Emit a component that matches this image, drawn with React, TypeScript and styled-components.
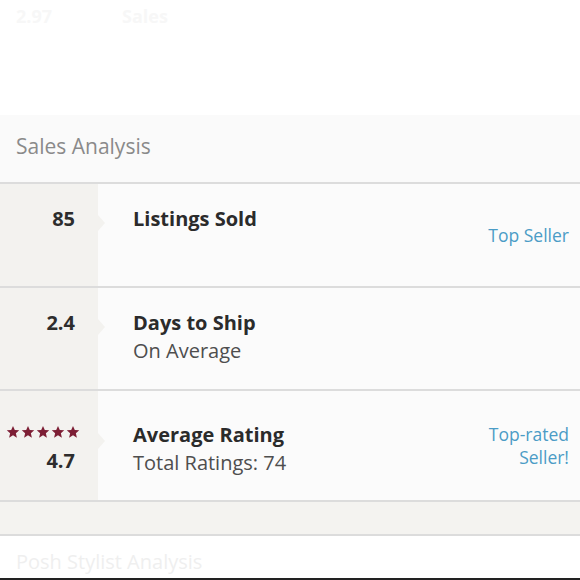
import styled, { createGlobalStyle } from 'styled-components';

const Global = createGlobalStyle`
  html, body {
    margin: 0;
    padding: 0;
    background: #ffffff;
  }
  body {
    font-family: 'Open Sans', 'Liberation Sans', sans-serif;
    width: 580px;
    height: 580px;
    overflow: hidden;
  }
`;

const Page = styled.div`
  display: flex;
  flex-direction: column;
  width: 580px;
  height: 580px;
`;

const Ghost = styled.div`
  height: 115px;
  box-sizing: border-box;
  padding: 4px 16px 0;
  display: flex;
  gap: 70px;
  font-size: 18px;
  color: #f7f7f7;
  font-weight: 700;
`;

const SectionHeader = styled.div`
  height: 67px;
  background: #fafafa;
  display: flex;
  align-items: center;
  padding: 0 16px;
  border-bottom: 2px solid #dcdcdc;
  h2 {
    margin: 0;
    font-size: 21px;
    font-weight: 400;
    color: #8a8a8a;
    padding-bottom: 6px;
  }
`;

const Row = styled.div<{ $height: number }>`
  display: flex;
  height: ${(p) => p.$height}px;
  border-bottom: 2px solid #dcdcdc;
  background: #fbfbfb;
`;

const Stat = styled.div<{ $top: number }>`
  position: relative;
  width: 98px;
  flex: none;
  background: #f3f2ef;
  box-sizing: border-box;
  padding: ${(p) => p.$top}px 23px 0 0;
  display: flex;
  flex-direction: column;
  align-items: flex-end;
  gap: 10px;
  &::after {
    content: '';
    position: absolute;
    right: -7px;
    top: ${(p) => p.$top + 8}px;
    border-left: 7px solid #f3f2ef;
    border-top: 8px solid transparent;
    border-bottom: 8px solid transparent;
  }
`;

const Value = styled.div`
  font-size: 20px;
  font-weight: 700;
  color: #2d2d2d;
  line-height: 24px;
`;

const Stars = styled.div`
  display: flex;
  gap: 1px;
  margin-right: -5px;
  svg {
    width: 14px;
    height: 14px;
    fill: #7d1f35;
  }
`;

const Body = styled.div<{ $top: number }>`
  flex: 1;
  padding: ${(p) => p.$top}px 0 0 35px;
  display: flex;
  flex-direction: column;
  gap: 4px;
`;

const Title = styled.div`
  font-size: 20px;
  font-weight: 700;
  color: #2b2b2b;
  line-height: 24px;
`;

const Sub = styled.div`
  font-size: 20px;
  color: #4e4e4e;
  line-height: 24px;
`;

const Badge = styled.div`
  padding-right: 11px;
  display: flex;
  align-items: center;
  text-align: right;
  font-size: 17.5px;
  line-height: 23px;
  color: #4b9cc6;
`;

const Band = styled.div`
  height: 32px;
  background: #f4f3f0;
  border-bottom: 2px solid #dcdcdc;
`;

const Next = styled.div`
  flex: 1;
  padding: 12px 16px 0;
  font-size: 20px;
  color: #efefef;
  border-bottom: 2px solid #222;
  overflow: hidden;
`;

const Star = () => (
  <svg viewBox="0 0 24 24">
    <path d="M12 1.5l3.1 7.1 7.6.6-5.8 5 1.8 7.5L12 17.7l-6.7 4 1.8-7.5-5.8-5 7.6-.6z" />
  </svg>
);

export default function App() {
  return (
    <Page>
      <Global />
      <Ghost>
        <span>2.97</span>
        <span>Sales</span>
      </Ghost>
      <SectionHeader>
        <h2>Sales Analysis</h2>
      </SectionHeader>
      <Row $height={102}>
        <Stat $top={23}>
          <Value>85</Value>
        </Stat>
        <Body $top={23}>
          <Title>Listings Sold</Title>
        </Body>
        <Badge>Top Seller</Badge>
      </Row>
      <Row $height={101}>
        <Stat $top={23}>
          <Value>2.4</Value>
        </Stat>
        <Body $top={23}>
          <Title>Days to Ship</Title>
          <Sub>On Average</Sub>
        </Body>
      </Row>
      <Row $height={109}>
        <Stat $top={34}>
          <Stars>
            <Star />
            <Star />
            <Star />
            <Star />
            <Star />
          </Stars>
          <Value>4.7</Value>
        </Stat>
        <Body $top={32}>
          <Title>Average Rating</Title>
          <Sub>Total Ratings: 74</Sub>
        </Body>
        <Badge>
          Top-rated
          <br />
          Seller!
        </Badge>
      </Row>
      <Band />
      <Next>Posh Stylist Analysis</Next>
    </Page>
  );
}
